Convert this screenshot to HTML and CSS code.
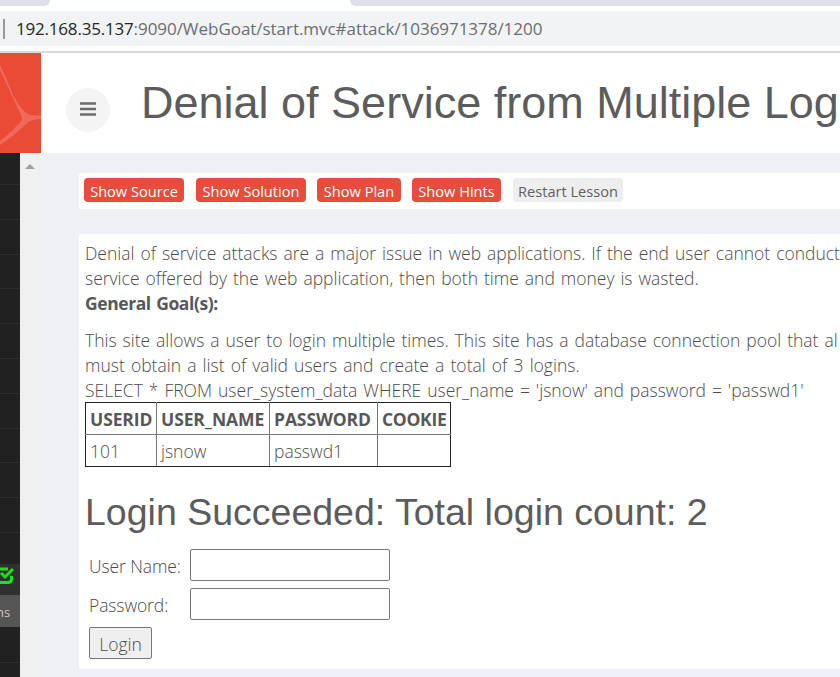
FILE: index.html
```html
<!DOCTYPE html>
<html lang="en">
<head>
<meta charset="utf-8">
<title>WebGoat</title>
<link rel="stylesheet" href="styles.css">
</head>
<body>
<div class="tabs"><div class="tab tab-left"></div><div class="tab tab-right"></div></div>
<div class="address"><span class="divider"></span><span class="url"><span class="host">192.168.35.137</span>:9090/WebGoat/start.mvc#attack/1036971378/1200</span></div>
<header class="header">
  <svg class="brand" width="41" height="100" viewBox="0 0 41 100"><rect width="41" height="100" fill="#ea4b37"/><path d="M0 12C8 27 13 48 25 59Q30 64 41 62V66Q31 66 26 71Q14 83 0 92V88Q13 78 22 67Q22 63 18 56Q9 36 0 17Z" fill="#ef6a5a"/></svg>
  <button class="menu" aria-label="Menu"><svg width="16" height="14" viewBox="0 0 16 14"><path d="M0 1.5H16M0 7H16M0 12.5H16" stroke="#6b6b6b" stroke-width="2.6"/></svg></button>
  <h1>Denial of Service from Multiple Log</h1>
</header>
<div class="app">
  <nav class="sidebar">
    <div class="row row-first"></div><div class="row"></div><div class="row"></div><div class="row"></div><div class="row"></div><div class="row"></div><div class="row"></div><div class="row"></div><div class="row"></div><div class="row"></div><div class="row"></div><div class="row row-last"></div>
    <div class="row row-open"><svg width="14" height="18" viewBox="0 0 14 18"><path d="M0 2H8M11.5 9V12Q11.5 15.5 8 15.5H0M1 6L5 10L13 2" fill="none" stroke="#15e51b" stroke-width="3"/></svg></div>
    <div class="row-current">ns</div>
    <div class="row row-after"></div>
  </nav>
  <div class="scroll"><svg width="10" height="5" viewBox="0 0 10 5"><path d="M0 5L5 0L10 5Z" fill="#a0a0a0"/></svg></div>
  <main class="main">
    <div class="toolbar">
      <button class="btn b1">Show Source</button><button class="btn b2">Show Solution</button><button class="btn b3">Show Plan</button><button class="btn b4">Show Hints</button><button class="btn plain b5">Restart Lesson</button>
    </div>
    <section class="lesson">
      <p>Denial of service attacks are a major issue in web applications. If the end user cannot conduct<br>service offered by the web application, then both time and money is wasted.<br><b class="goal">General Goal(s):</b></p>
      <p class="second">This site allows a user to login multiple times. This site has a database connection pool that al<br><span class="wider">must obtain a list of valid users and create a total of 3 logins.</span><br>SELECT * FROM user_system_data WHERE user_name = 'jsnow' and password = 'passwd1'</p>
      <table class="result">
        <tr><th class="c1">USERID</th><th class="c2">USER_NAME</th><th class="c3">PASSWORD</th><th class="c4">COOKIE</th></tr>
        <tr><td>101</td><td>jsnow</td><td>passwd1</td><td></td></tr>
      </table>
      <h2>Login Succeeded: Total login count: 2</h2>
      <form class="form">
        <label for="u">User Name:</label><input id="u" type="text">
        <label for="p">Password:</label><input id="p" type="password">
        <button class="login" type="button">Login</button>
      </form>
    </section>
  </main>
</div>
</body>
</html>
```
FILE: styles.css
```css
* { box-sizing: border-box; }
body { margin: 0; width: 840px; height: 677px; overflow: hidden; background: #fff; color: #4c4c4c; font: 300 17.5px/25px "Open Sans", "Noto Sans", sans-serif; white-space: nowrap; }
button { font: inherit; color: inherit; padding: 0; }
.tabs { height: 11px; display: flex; justify-content: space-between; }
.tab { height: 6px; background: #dedfe8; }
.tab-left { width: 50px; border-bottom-right-radius: 6px; }
.tab-right { width: 490px; border-bottom-left-radius: 6px; }
.address { height: 35px; background: #f1f3f4; display: flex; align-items: center; padding-left: 3px; color: #6b6e71; font-weight: 400; font-size: 17px; }
.divider { width: 2px; height: 20px; background: #999; margin-right: 11px; }
.url { letter-spacing: -0.04px; }
.host { color: #252628; letter-spacing: -0.2px; }
.header { margin-top: 5px; border-top: 2px solid #d9dadb; height: 102px; display: flex; overflow: hidden; }
.brand { flex: none; }
.menu { flex: none; margin: 35px 0 0 25px; width: 44px; height: 44px; border: 0; border-radius: 50%; background: #f4f4f4; display: flex; align-items: center; justify-content: center; padding-bottom: 2px; }
h1 { margin: 25px 0 0 31px; font: 400 45px/50px "Liberation Sans", Arial, sans-serif; color: #5c5c5c; }
.app { display: flex; height: 524px; }
.sidebar { width: 20px; flex: none; background: #212121; }
.row { height: 34.8px; border-bottom: 1px solid #2d2d2d; }
.row-first { height: 32px; }
.row-last { height: 31px; border: 0; }
.row-open { height: 31px; border: 0; background: #303030; padding-top: 3px; line-height: 0; }
.row-current { height: 32px; background: #555; color: #c8c8c8; font-size: 13px; font-weight: 400; line-height: 34px; text-indent: -4px; }
.row-after { height: 36px; }
.scroll { width: 21px; flex: none; background: #f0f0f1; padding: 9px 0 0 5px; line-height: 0; }
.scroll svg { margin-top: -1px; }
.main { flex: 1; min-width: 0; background: #eff0f6; padding: 20px 0 0 38px; }
.toolbar { height: 36px; background: #fff; border-radius: 3px 0 0 3px; padding: 5px; display: flex; font-size: 14.6px; font-weight: 400; word-spacing: 1.3px; }
.btn { height: 24px; border: 0; border-radius: 4px; background: #e74c3c; color: #fff; line-height: 24px; padding-top: 1px; margin-right: 12px; }
.b1 { width: 100px; } .b2 { width: 110px; margin-right: 11px; } .b3 { width: 84px; margin-right: 11px; } .b4 { width: 89px; } .b5 { width: 110px; }
.plain { background: #eee; color: #606060; }
.lesson { margin-top: 25px; height: 435px; background: #fff; border-radius: 3px 0 0 3px; padding: 7px 0 7px 6px; overflow: hidden; }
.lesson p { margin: 0; word-spacing: 1.4px; }
.lesson .second { margin-top: 12px; }
.lesson .wider { word-spacing: 1.6px; }
b, th { font-weight: 700; color: #585858; }
.goal { letter-spacing: -0.43px; }
.result { border-collapse: collapse; table-layout: fixed; width: 366px; margin-top: -1px; border: 1px solid #222; }
.result th, .result td { border: 1px solid #777; height: 32px; padding: 2px 0 0 4px; text-align: left; line-height: 25px; }
.result th { letter-spacing: -0.1px; }
.result tr:first-child > * { border-top-color: #222; }
.result tr:last-child > * { border-bottom-color: #222; }
.result tr > :first-child { border-left-color: #222; }
.result tr > :last-child { border-right-color: #222; }
.result .c4 { letter-spacing: -0.3px; }
.c1 { width: 71px; } .c2 { width: 113px; } .c3 { width: 108px; } .c4 { width: 73px; }
h2 { margin: 23px 0 0; font: 400 37.5px/44px "Liberation Sans", Arial, sans-serif; color: #5c5c5c; }
.form { margin: 15px 0 0 4px; display: grid; grid-template-columns: 101px 200px; row-gap: 7px; }
.form label { height: 32px; line-height: 35px; letter-spacing: -0.1px; }
.form input { width: 200px; height: 32px; border: 1px solid #767676; border-radius: 2px; background: #fff; }
.login { width: 63px; height: 32px; border: 1px solid #767676; border-radius: 2px; background: #efefef; line-height: 32px; }
```
